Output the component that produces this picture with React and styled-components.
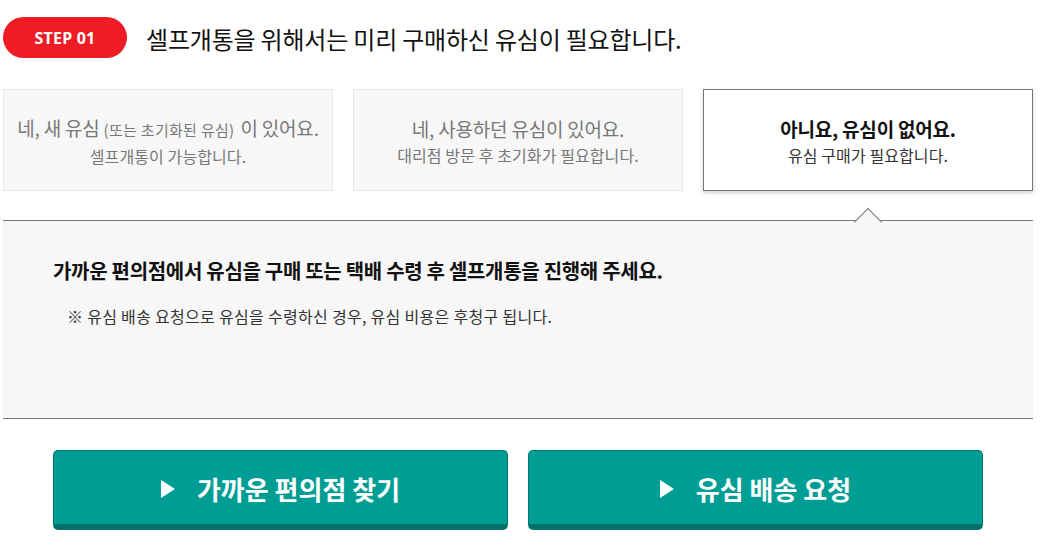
import React from 'react';
import styled, { createGlobalStyle } from 'styled-components';

const GlobalStyle = createGlobalStyle`
  html, body {
    margin: 0;
    padding: 0;
    background: #fff;
  }
  body {
    font-family: "Noto Sans CJK KR", "Noto Sans", sans-serif;
    color: #111;
  }
`;

const options = [
  {
    title: '네, 새 유심',
    note: '(또는 초기화된 유심)',
    tail: '이 있어요.',
    sub: '셀프개통이 가능합니다.',
  },
  {
    title: '네, 사용하던 유심이 있어요.',
    sub: '대리점 방문 후 초기화가 필요합니다.',
  },
  {
    title: '아니요, 유심이 없어요.',
    sub: '유심 구매가 필요합니다.',
    active: true,
  },
];

const App = () => (
  <>
    <GlobalStyle />
    <Page>
      <Header>
        <StepBadge>STEP 01</StepBadge>
        <Heading>셀프개통을 위해서는 미리 구매하신 유심이 필요합니다.</Heading>
      </Header>

      <Options>
        {options.map((opt) => (
          <Card key={opt.title} $active={opt.active}>
            <CardTitle $active={opt.active}>
              {opt.title}
              {opt.note && <SmallNote>{opt.note}</SmallNote>}
              {opt.tail}
            </CardTitle>
            <CardSub $active={opt.active}>{opt.sub}</CardSub>
            {opt.active && <Notch />}
          </Card>
        ))}
      </Options>

      <Panel>
        <PanelTitle>가까운 편의점에서 유심을 구매 또는 택배 수령 후 셀프개통을 진행해 주세요.</PanelTitle>
        <PanelNote>※ 유심 배송 요청으로 유심을 수령하신 경우, 유심 비용은 후청구 됩니다.</PanelNote>
      </Panel>

      <Actions>
        <ActionButton>
          <PlayIcon viewBox="0 0 14 18"><path d="M0 0 L14 9 L0 18 Z" fill="#fff" /></PlayIcon>
          가까운 편의점 찾기
        </ActionButton>
        <ActionButton>
          <PlayIcon viewBox="0 0 14 18"><path d="M0 0 L14 9 L0 18 Z" fill="#fff" /></PlayIcon>
          유심 배송 요청
        </ActionButton>
      </Actions>
    </Page>
  </>
);

const Page = styled.div`
  width: 1030px;
  padding: 17px 0 0 3px;
`;

const Header = styled.div`
  display: flex;
  align-items: center;
  gap: 19px;
`;

const StepBadge = styled.div`
  width: 124px;
  height: 41px;
  border-radius: 21px;
  background: #ee1c25;
  color: #fff;
  font-family: "Noto Sans", sans-serif;
  font-weight: 700;
  font-size: 16px;
  letter-spacing: 0.2px;
  display: flex;
  align-items: center;
  justify-content: center;
`;

const Heading = styled.h2`
  margin: 0;
  font-size: 24px;
  font-weight: 400;
  letter-spacing: -0.2px;
  color: #111;
  line-height: 30px;
  padding-top: 2px;
`;

const Options = styled.div`
  display: grid;
  grid-template-columns: repeat(3, 330px);
  gap: 20px;
  margin-top: 31px;
`;

const Card = styled.div`
  position: relative;
  box-sizing: border-box;
  height: 102px;
  border: 1px solid ${(p) => (p.$active ? '#777' : '#e6e6e6')};
  background: ${(p) => (p.$active ? '#fff' : '#f7f7f7')};
  box-shadow: ${(p) => (p.$active ? '0 2px 4px rgba(0,0,0,0.18)' : 'none')};
  display: flex;
  flex-direction: column;
  align-items: center;
  justify-content: center;
  padding-top: 2px;
`;

const CardTitle = styled.div`
  font-size: 19px;
  line-height: 27px;
  font-weight: ${(p) => (p.$active ? 700 : 400)};
  color: ${(p) => (p.$active ? '#111' : '#777')};
  letter-spacing: -0.2px;
`;

const SmallNote = styled.span`
  font-size: 15px;
  margin: 0 6px 0 4px;
  letter-spacing: 0.3px;
`;

const CardSub = styled.div`
  font-size: 16px;
  line-height: 26px;
  color: ${(p) => (p.$active ? '#333' : '#777')};
  letter-spacing: 0.1px;
`;

const Notch = styled.span`
  position: absolute;
  z-index: 2;
  top: 122px;
  left: calc(50% - 10px);
  width: 19px;
  height: 19px;
  background: #f7f7f7;
  border-top: 1px solid #777;
  border-left: 1px solid #777;
  transform: rotate(45deg);
`;

const Panel = styled.div`
  box-sizing: border-box;
  height: 199px;
  margin-top: 29px;
  padding: 36px 50px 0;
  background: #f7f7f7;
  border-top: 1px solid #777;
  border-bottom: 1px solid #777;
`;

const PanelTitle = styled.p`
  margin: 0;
  font-size: 20px;
  line-height: 28px;
  font-weight: 700;
  color: #111;
  letter-spacing: -0.3px;
`;

const PanelNote = styled.p`
  margin: 20px 0 0;
  padding-left: 14px;
  font-size: 16px;
  line-height: 22px;
  color: #333;
  letter-spacing: 0.3px;
`;

const Actions = styled.div`
  display: flex;
  justify-content: center;
  gap: 20px;
  margin-top: 31px;
`;

const ActionButton = styled.button`
  box-sizing: border-box;
  width: 455px;
  height: 80px;
  border: 1px solid #00786f;
  border-bottom: 6px solid #00706a;
  border-radius: 5px;
  background: #009d94;
  color: #fff;
  font-family: "Noto Sans CJK KR", sans-serif;
  font-size: 26px;
  font-weight: 700;
  display: flex;
  align-items: center;
  justify-content: center;
  gap: 22px;
  padding: 2px 0 0;
  cursor: pointer;
`;

const PlayIcon = styled.svg`
  width: 14px;
  height: 18px;
`;

export default App;
